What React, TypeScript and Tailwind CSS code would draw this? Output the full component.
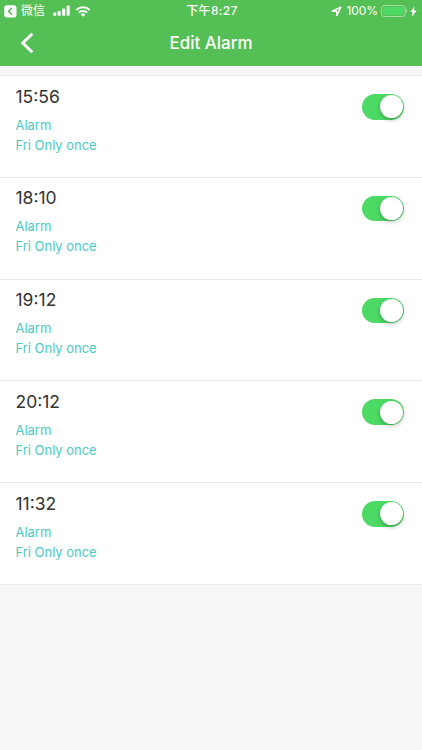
import React from "react"

const alarms = [
    { time: "15:56", label: "Alarm", repeat: "Fri Only once" },
    { time: "18:10", label: "Alarm", repeat: "Fri Only once" },
    { time: "19:12", label: "Alarm", repeat: "Fri Only once" },
    { time: "20:12", label: "Alarm", repeat: "Fri Only once" },
    { time: "11:32", label: "Alarm", repeat: "Fri Only once" },
]

function StatusBar() {
    return (
        <div className="grid h-[22px] grid-cols-[1fr_auto_1fr] items-center text-[12px] leading-[22px]">
            <div className="flex h-full items-center pl-[4px]">
                <svg width="13" height="13" viewBox="0 0 13 13">
                    <rect x="0.2" y="0.2" width="12.3" height="12.2" rx="2.6" fill="#fff" />
                    <path d="M7.9 3 4.5 6.3l3.4 3.3" fill="none" stroke="#54bf54" strokeWidth="1.5" />
                </svg>
                <span className="ml-[4px]">微信</span>
                <svg className="ml-[8px]" width="17" height="12" viewBox="0 0 17 12" fill="#fff">
                    <rect x="0.2" y="7.5" width="3.1" height="3.3" rx="0.8" />
                    <rect x="4.6" y="6" width="3.1" height="4.8" rx="0.8" />
                    <rect x="9.1" y="3.6" width="3.1" height="7.2" rx="0.8" />
                    <rect x="13.6" y="0.6" width="3.1" height="10.2" rx="0.8" />
                </svg>
                <svg className="ml-[5px]" width="16" height="11" viewBox="0 0 15 11" fill="none" stroke="#fff" strokeWidth="2">
                    <path d="M0.9 4a9.3 9.3 0 0 1 13.2 0" />
                    <path d="M3.3 6.6a6 6 0 0 1 8.4 0" />
                    <path d="M7.5 10.8 5.1 8.4a3.4 3.4 0 0 1 4.8 0z" fill="#fff" stroke="none" />
                </svg>
            </div>
            <span className="pl-[2px] font-medium tracking-[0.35px]">下午8:27</span>
            <div className="flex h-full items-center justify-end pr-[5px]">
                <svg width="11" height="11" viewBox="0 0 11 11">
                    <path d="M9.7 1.2 1.2 5.1l4.5.1.1 4.4z" fill="none" stroke="#fff" strokeWidth="1.5" strokeLinejoin="round" />
                </svg>
                <span className="ml-[5px] tracking-[-0.1px]">100%</span>
                <svg className="ml-[3px]" width="27" height="12" viewBox="0 0 27 12">
                    <rect x="0.5" y="0.5" width="23.5" height="11" rx="2.6" fill="none" stroke="#a5dea5" />
                    <rect x="2" y="2" width="20.5" height="8" rx="1.3" fill="#4cd964" />
                    <path d="M25 4.1c1.7.6 1.7 3.2 0 3.8z" fill="#a5dea5" />
                </svg>
                <svg className="ml-[2px]" width="7" height="11" viewBox="0 0 7 11">
                    <path d="M4.6 0.2 0.2 6.1h2.5l-.8 4.7L6.8 4.5H4z" fill="#fff" />
                </svg>
            </div>
        </div>
    )
}

function Toggle() {
    return (
        <button
            type="button"
            role="switch"
            aria-checked="true"
            className="mt-[18px] flex h-[25.5px] w-[41.5px] items-center justify-end rounded-full bg-[#4cd964] pr-[1px]">
            <span className="size-[23px] rounded-full bg-white shadow-[0_2px_4px_rgba(0,0,0,0.25)]" />
        </button>
    )
}

export default function App() {
    return (
        <div className="h-[750px] w-full overflow-hidden bg-[#f6f6f6] font-['Inter','Noto_Sans_CJK_SC',sans-serif]">
            <header className="h-[65.5px] bg-[#54bf54] text-white">
                <StatusBar />
                <div className="grid h-[42px] grid-cols-[1fr_auto_1fr] items-center">
                    <svg className="ml-[20px]" width="15" height="22" viewBox="0 0 15 22">
                        <path d="M12.3 1.8 2.8 11l9.5 9.2" fill="none" stroke="#fff" strokeWidth="2.9" />
                    </svg>
                    <h1 className="text-[17px] font-medium leading-[22px]">Edit Alarm</h1>
                </div>
            </header>
            <ul className="mt-[9.5px] border-t border-[#ebebeb]">
                {alarms.map((alarm) => (
                    <li key={alarm.time} className="flex h-[101.8px] justify-between border-b border-[#ebebeb] bg-white pl-[15.5px] pr-[18.5px]">
                        <div>
                            <p className="mt-[8.6px] text-[17.5px] leading-[24px] text-[#333]">{alarm.time}</p>
                            <p className="mt-[6px] text-[13px] leading-[20px] tracking-[-0.03px] text-[#4dc9c4]">{alarm.label}</p>
                            <p className="text-[13px] leading-[20px] tracking-[-0.03px] text-[#4dc9c4]">{alarm.repeat}</p>
                        </div>
                        <Toggle />
                    </li>
                ))}
            </ul>
        </div>
    )
}
